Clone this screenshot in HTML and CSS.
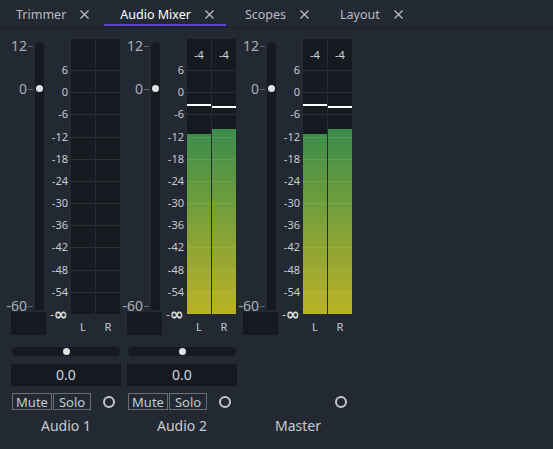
FILE: index.html
```html
<!DOCTYPE html>
<html lang="en">
<head>
<meta charset="UTF-8">
<meta name="viewport" content="width=device-width, initial-scale=1.0">
<title>Audio Mixer</title>
<link rel="stylesheet" href="styles.css">
</head>
<body>
  <div class="tabs">
    <div class="tab">Trimmer <svg class="close" viewBox="0 0 9 9"><path d="M0.5 0.5L8.5 8.5M8.5 0.5L0.5 8.5"/></svg></div>
    <div class="tab active">Audio Mixer <svg class="close" viewBox="0 0 9 9"><path d="M0.5 0.5L8.5 8.5M8.5 0.5L0.5 8.5"/></svg></div>
    <div class="tab">Scopes <svg class="close" viewBox="0 0 9 9"><path d="M0.5 0.5L8.5 8.5M8.5 0.5L0.5 8.5"/></svg></div>
    <div class="tab">Layout <svg class="close" viewBox="0 0 9 9"><path d="M0.5 0.5L8.5 8.5M8.5 0.5L0.5 8.5"/></svg></div>
  </div>

  <div class="mixer">
    <!-- Audio 1 -->
    <div class="strip">
      <div class="top">
        <div class="fader">
          <div class="track">
            <div class="groove"></div>
            <span class="flabel f12">12</span>
            <span class="flabel f0">0</span>
            <span class="flabel f60">-60</span>
            <div class="knob"></div>
          </div>
          <div class="fbox"></div>
        </div>
        <div class="scale">
          <span>6</span><span>0</span><span>-6</span><span>-12</span><span>-18</span><span>-24</span>
          <span>-30</span><span>-36</span><span>-42</span><span>-48</span><span>-54</span>
          <span class="inf">-<b>∞</b></span>
        </div>
        <div class="meterwrap">
          <div class="meter">
            <div class="col"><div class="peak"></div><div class="bars"></div></div>
            <div class="col"><div class="peak"></div><div class="bars"></div></div>
          </div>
          <div class="lr"><span>L</span><span>R</span></div>
        </div>
      </div>
      <div class="pan"><div class="pan-dot"></div></div>
      <div class="value">0.0</div>
      <div class="buttons">
        <button class="btn">Mute</button><button class="btn">Solo</button>
        <span class="ring"></span>
      </div>
      <div class="name">Audio 1</div>
    </div>

    <!-- Audio 2 -->
    <div class="strip">
      <div class="top">
        <div class="fader">
          <div class="track">
            <div class="groove"></div>
            <span class="flabel f12">12</span>
            <span class="flabel f0">0</span>
            <span class="flabel f60">-60</span>
            <div class="knob"></div>
          </div>
          <div class="fbox"></div>
        </div>
        <div class="scale">
          <span>6</span><span>0</span><span>-6</span><span>-12</span><span>-18</span><span>-24</span>
          <span>-30</span><span>-36</span><span>-42</span><span>-48</span><span>-54</span>
          <span class="inf">-<b>∞</b></span>
        </div>
        <div class="meterwrap">
          <div class="meter">
            <div class="col">
              <div class="peak">-4</div>
              <div class="bars">
                <div class="fill" style="height:180px"></div>
                <div class="hold" style="bottom:208px"></div>
              </div>
            </div>
            <div class="col">
              <div class="peak">-4</div>
              <div class="bars">
                <div class="fill" style="height:185px"></div>
                <div class="hold" style="bottom:206px"></div>
              </div>
            </div>
          </div>
          <div class="lr"><span>L</span><span>R</span></div>
        </div>
      </div>
      <div class="pan"><div class="pan-dot"></div></div>
      <div class="value">0.0</div>
      <div class="buttons">
        <button class="btn">Mute</button><button class="btn">Solo</button>
        <span class="ring"></span>
      </div>
      <div class="name">Audio 2</div>
    </div>

    <!-- Master -->
    <div class="strip master">
      <div class="top">
        <div class="fader">
          <div class="track">
            <div class="groove"></div>
            <span class="flabel f12">12</span>
            <span class="flabel f0">0</span>
            <span class="flabel f60">-60</span>
            <div class="knob"></div>
          </div>
          <div class="fbox"></div>
        </div>
        <div class="scale">
          <span>6</span><span>0</span><span>-6</span><span>-12</span><span>-18</span><span>-24</span>
          <span>-30</span><span>-36</span><span>-42</span><span>-48</span><span>-54</span>
          <span class="inf">-<b>∞</b></span>
        </div>
        <div class="meterwrap">
          <div class="meter">
            <div class="col">
              <div class="peak">-4</div>
              <div class="bars">
                <div class="fill" style="height:180px"></div>
                <div class="hold" style="bottom:208px"></div>
              </div>
            </div>
            <div class="col">
              <div class="peak">-4</div>
              <div class="bars">
                <div class="fill" style="height:185px"></div>
                <div class="hold" style="bottom:206px"></div>
              </div>
            </div>
          </div>
          <div class="lr"><span>L</span><span>R</span></div>
        </div>
      </div>
      <div class="pan"></div>
      <div class="value"></div>
      <div class="buttons">
        <span class="ring"></span>
      </div>
      <div class="name">Master</div>
    </div>
  </div>
</body>
</html>
```

FILE: styles.css
```css
body {
margin: 0;
padding: 0;
background-color: #232932;
font-family: "Noto Sans", "Open Sans", sans-serif;
color: #c6cad0;
width: 553px;
height: 449px;
overflow: hidden;
}

/* tab bar */
.tabs {
display: flex;
height: 27px;
border-bottom: 1px solid #1b2028;
}

.tab {
display: flex;
align-items: center;
gap: 14px;
height: 26px;
box-sizing: border-box;
padding: 5px 12px 0 16px;
margin-right: 3px;
border-bottom: 2px solid transparent;
font-size: 12.5px;
color: #b7bcc4;
}

.tab.active {
color: #ffffff;
border-bottom-color: #5b42c6;
}

.close {
width: 9px;
height: 9px;
stroke: #b7bcc4;
stroke-width: 1.3;
fill: none;
}

/* mixer */
.mixer {
display: flex;
gap: 6px;
padding: 10px 0 0 11px;
}

.strip {
width: 110px;
display: flex;
flex-direction: column;
}

.top {
display: flex;
height: 298px;
}

/* fader */
.fader {
width: 35px;
display: flex;
flex-direction: column;
}

.track {
position: relative;
height: 272px;
}

.groove {
position: absolute;
left: 24px;
top: 4px;
bottom: 0;
width: 9px;
border-radius: 5px 5px 0 0;
background-color: #161a20;
}

.flabel {
position: absolute;
right: 13px;
font-size: 14px;
line-height: 16px;
color: #a9aeb5;
display: flex;
align-items: center;
}

.flabel::after {
content: "";
display: block;
width: 5px;
height: 1px;
margin-left: 1px;
background-color: #5e646c;
}

.f12 { top: 0; }
.f0 { top: 43px; }
.f60 { top: 260px; }

.knob {
position: absolute;
left: 25px;
top: 47px;
width: 7px;
height: 7px;
border-radius: 50%;
background-color: #dfe1e4;
}

.fbox {
margin-top: 2px;
height: 23px;
background-color: #161a20;
}

/* meter scale */
.scale {
width: 25px;
box-sizing: border-box;
padding: 25px 3px 0 0;
height: 283px;
display: flex;
flex-direction: column;
justify-content: space-between;
align-items: flex-end;
font-size: 11px;
line-height: 14px;
color: #c6cad0;
}

.scale .inf {
display: flex;
align-items: center;
color: #dfe1e4;
}

.scale .inf b {
font-family: "DejaVu Sans", sans-serif;
font-size: 17px;
font-weight: 700;
line-height: 14px;
}

/* meter */
.meterwrap {
width: 49px;
}

.meter {
display: flex;
gap: 1px;
margin-top: 1px;
height: 275px;
background-color: #252b33;
}

.col {
flex: 1;
display: flex;
flex-direction: column;
background-color: #161a20;
}

.peak {
height: 31px;
display: flex;
align-items: center;
justify-content: center;
font-size: 11px;
color: #d3d6da;
box-sizing: border-box;
}

.bars {
flex: 1;
position: relative;
}

.bars::after {
content: "";
position: absolute;
inset: 0;
background-image: repeating-linear-gradient(to bottom, rgba(255, 255, 255, 0.09) 0 1px, transparent 1px 22.18px);
}

.fill {
position: absolute;
left: 0;
right: 0;
bottom: 0;
background-image: linear-gradient(to bottom, #2e8a56 0%, #3c8c4c 25%, #6f9d3c 55%, #a3ab2e 85%, #b9b224 100%);
background-size: 100% 244px;
background-position: bottom;
}

.hold {
position: absolute;
left: 0;
right: 0;
height: 2px;
background-color: #ffffff;
}

.lr {
display: flex;
gap: 1px;
margin-top: 6px;
font-size: 11px;
line-height: 14px;
color: #c6cad0;
}

.lr span {
flex: 1;
text-align: center;
}

/* bottom controls */
.pan {
position: relative;
margin: 11px 0 0 1px;
width: 108px;
height: 9px;
border-radius: 5px;
background-color: #161a20;
}

.pan-dot {
position: absolute;
left: 51px;
top: 1px;
width: 7px;
height: 7px;
border-radius: 50%;
background-color: #dfe1e4;
}

.value {
margin-top: 8px;
height: 22px;
background-color: #161a20;
text-align: center;
font-size: 14px;
line-height: 22px;
color: #d3d6da;
}

.buttons {
display: flex;
align-items: center;
margin: 7px 0 0 1px;
height: 17px;
}

.btn {
height: 17px;
padding: 0 3px;
margin: 0 1px 0 0;
border: 1px solid #6a6f77;
background: transparent;
font-family: "Noto Sans", "Open Sans", sans-serif;
font-size: 13px;
line-height: 14px;
color: #c6cad0;
}

.btn:first-child {
width: 40px;
}

.btn:nth-child(2) {
width: 38px;
}

.ring {
margin-left: auto;
margin-right: 6px;
width: 8px;
height: 8px;
border: 2px solid #c4c7cc;
border-radius: 50%;
}

.name {
margin-top: 6px;
text-align: center;
font-size: 14px;
line-height: 20px;
color: #c6cad0;
}

.master .pan,
.master .value {
visibility: hidden;
}
```
